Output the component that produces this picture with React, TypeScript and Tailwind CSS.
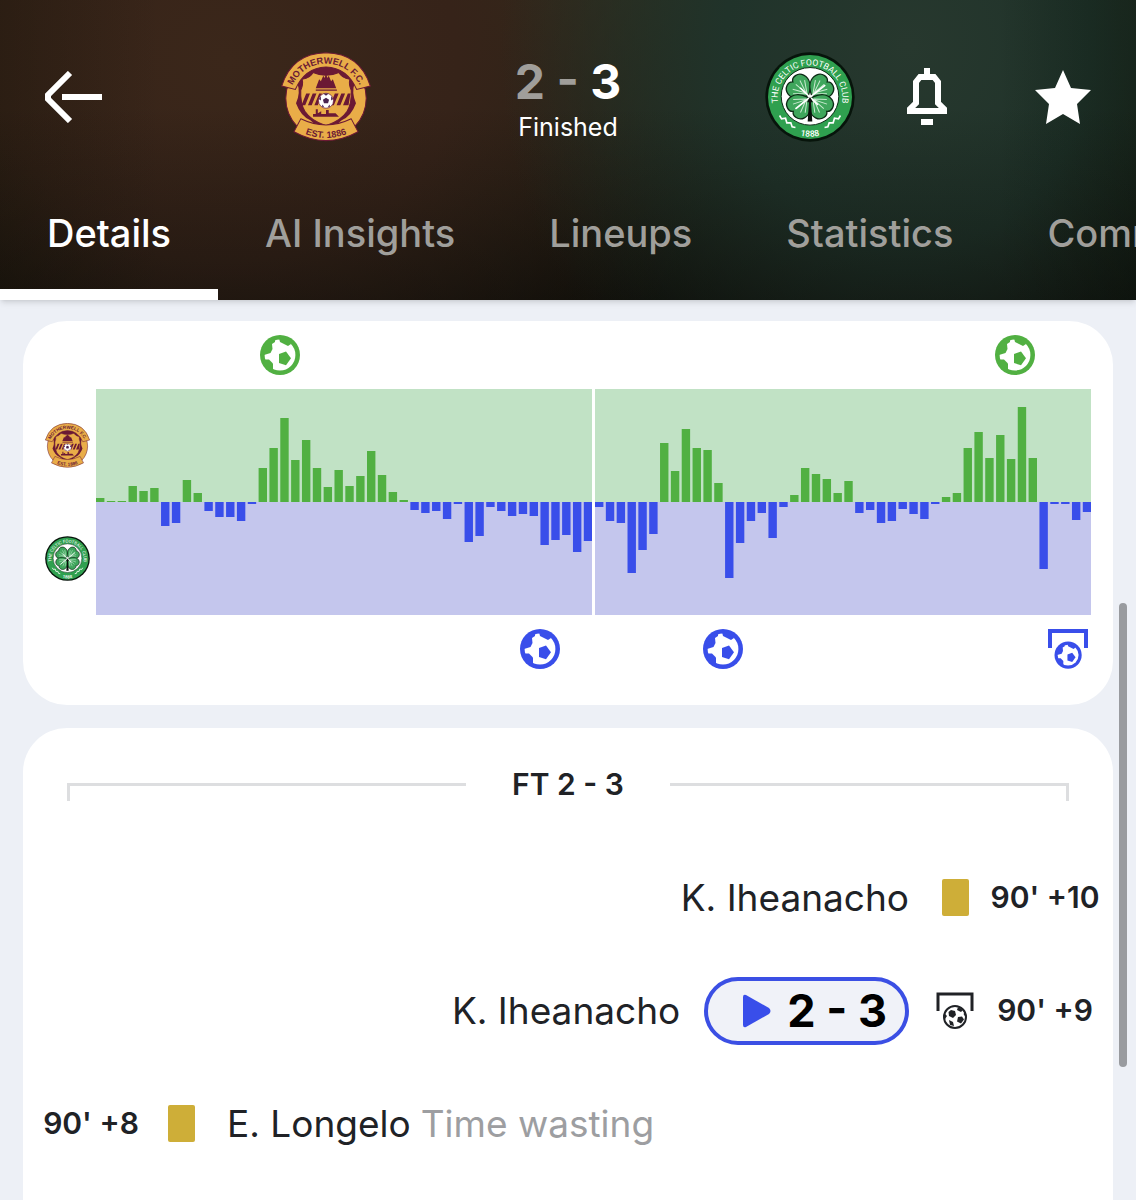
import clsx from "clsx";
import type { ReactNode } from "react";

const HOME = "#51b042";
const AWAY = "#394eea";

// positive values are home pressure, negative values are away pressure
const firstHalf = [
  4, 1, 1, 16, 11, 14, -24, -21, 22, 9, -9, -15, -15, -19, -2, 34, 54, 84, 42,
  62, 34, 15, 32, 16, 26, 51, 27, 10, 2, -8, -11, -9, -17, -2, -40, -34, -5,
  -9, -14, -12, -14, -43, -38, -33, -50, -39,
];
const secondHalf = [
  -5, -19, -21, -71, -48, -32, 59, 31, 73, 54, 52, 19, -76, -41, -19, -11, -36,
  -5, 7, 34, 28, 23, 9, 21, -11, -8, -21, -19, -7, -12, -17, -2, 5, 9, 54, 70,
  44, 67, 43, 95, 44, -67, -2, -2, -18, -10,
];

const tabs = ["Details", "AI Insights", "Lineups", "Statistics", "Commentary"];

function MotherwellBadge({ id, className }: { id: string; className?: string }) {
  return (
    <svg viewBox="64 40 264 264" className={className} role="img" aria-label="Motherwell">
      <circle cx="196" cy="176" r="118" fill="#e9ad48" stroke="#6b1934" strokeWidth="3" />
      <path d="M112 132 Q122 160 108 190 Q122 228 150 240 Q172 262 196 266 Q220 262 242 240 Q270 228 284 190 Q270 160 280 132 L262 104 Q230 78 196 78 Q162 78 130 104Z" fill="#6b1934" />
      <path d="M126 120 Q150 116 158 100 Q176 108 196 108 Q216 108 234 100 Q242 116 266 120 Q262 134 270 152 Q272 190 258 214 Q240 242 196 256 Q152 242 134 214 Q120 190 122 152 Q130 134 126 120Z" fill="#e9ad48" stroke="#6b1934" strokeWidth="3" />
      <path d="M166 146 l10 -26 l5 6 l7 -16 l4 6 l4 -12 l4 12 l4 -6 l7 16 l5 -6 l10 26Z M166 150h62v4h-62Z" fill="#6b1934" />
      <path d="M124 196 l14 -34 h11 l-14 34Z M143 196 l14 -34 h11 l-14 34Z M162 196 l14 -34 h8 l-12 34Z M208 196 l14 -34 h11 l-14 34Z M227 196 l14 -34 h11 l-14 34Z M246 196 l14 -34 h8 l-6 34Z" fill="#6b1934" />
      <path d="M158 230 v-8 h8 v-14 h6 v12 l10 -6 v8 h14 v-12 h8 v10 h20 l10 10Z" fill="#6b1934" />
      <circle cx="196" cy="183" r="22" fill="#fff" stroke="#6b1934" strokeWidth="2" />
      <path d="M196 174 l9 6 l-3 10 h-12 l-3 -10Z M188 162 h16 l-8 6Z M175 178 l6 -8 v12Z M217 178 l-6 -8 v12Z M184 200 l2 -6 l5 9Z M208 200 l-2 -6 l-5 9Z" fill="#4a2450" />
      <path d="M66 140 Q96 44 196 42 Q296 44 326 140 L286 150 Q258 86 196 84 Q134 86 106 150Z" fill="#e9ad48" stroke="#6b1934" strokeWidth="3" />
      <path d="M122 236 Q196 272 270 236 L290 274 Q196 326 102 274Z" fill="#e9ad48" stroke="#6b1934" strokeWidth="3" />
      <path id={`${id}-top`} d="M92 148 Q124 76 196 74 Q268 76 300 148" fill="none" />
      <path id={`${id}-bottom`} d="M116 272 Q196 312 276 272" fill="none" />
      <text fill="#6b1934" className="font-['Liberation_Sans'] text-[27px] font-bold">
        <textPath href={`#${id}-top`} startOffset="50%" textAnchor="middle">
          MOTHERWELL F.C.
        </textPath>
      </text>
      <text fill="#6b1934" className="font-['Liberation_Sans'] text-[27px] font-bold">
        <textPath href={`#${id}-bottom`} startOffset="50%" textAnchor="middle">
          EST. 1886
        </textPath>
      </text>
    </svg>
  );
}

function Leaf({ angle }: { angle: number }) {
  return (
    <g transform={`rotate(${angle} 180 168)`}>
      <path
        d="M180 162 C154 152 138 134 143 112 C148 92 172 88 180 100 C188 88 212 92 217 112 C222 134 206 152 180 162Z"
        fill="#3fa65c"
        stroke="#0c2a15"
        strokeWidth="4"
      />
      <path
        d="M180 158 V112 M179 150 L163 114 M181 150 L197 114 M178 154 L153 124 M182 154 L207 124"
        stroke="#c9ead0"
        strokeWidth="3"
        fill="none"
      />
    </g>
  );
}

function CelticBadge({ id, className }: { id: string; className?: string }) {
  return (
    <svg viewBox="44 34 272 272" className={className} role="img" aria-label="Celtic">
      <circle cx="180" cy="170" r="135" fill="#07140b" />
      <circle cx="180" cy="170" r="127" fill="#2fa04f" />
      <circle cx="180" cy="168" r="87" fill="#fff" stroke="#0c2a15" strokeWidth="3" />
      <Leaf angle={-50} />
      <Leaf angle={50} />
      <Leaf angle={132} />
      <Leaf angle={228} />
      <path d="M136 206 L226 134 M150 142 L204 194" stroke="#fff" strokeWidth="5" />
      <path d="M180 170 l-9 16 h6 l-4 58 h14 l-4 -58 h6Z" fill="#0a0f0b" />
      <path id={`${id}-top`} d="M86 200 A98 98 0 1 1 274 200" fill="none" />
      <path id={`${id}-bottom`} d="M140 284 Q180 296 220 284" fill="none" />
      <text fill="#fff" className="font-[Roboto] text-[26px]">
        <textPath href={`#${id}-top`} startOffset="50%" textAnchor="middle">
          THE CELTIC FOOTBALL CLUB
        </textPath>
      </text>
      <text fill="#fff" className="font-[Roboto] text-[26px] font-medium">
        <textPath href={`#${id}-bottom`} startOffset="50%" textAnchor="middle">
          1888
        </textPath>
      </text>
      <path
        d="M88 226 l6 10 l12 -2 l4 14 l12 0 l4 12 l10 2 M272 226 l-6 10 l-12 -2 l-4 14 l-12 0 l-4 12 l-10 2"
        stroke="#fff"
        strokeWidth="5"
        fill="none"
      />
    </svg>
  );
}

function Ball({ x = 0, y = 0, scale = 1, color }: { x?: number; y?: number; scale?: number; color: string }) {
  return (
    <g transform={`translate(${x} ${y}) scale(${scale})`} fill={color}>
      <circle cx="20" cy="20" r="20" />
      <circle cx="20" cy="20" r="15.4" fill="#fff" />
      <path d="M19 3 L20 7 L28 11 L31 9 L29 3Z" />
      <path d="M3 12 L8 5 L15 4 L15 7 L12 9 L12.500 14 L10.500 18 L4 20Z" />
      <path d="M3 24.500 L9 24.500 L13 28.500 L13 35 L7 34Z" />
      <path d="M19 19 L26 16.500 L31 23.300 L26 30.300 L19 28Z" />
    </g>
  );
}

function PenaltyIcon() {
  return (
    <svg viewBox="0 0 38 38" className="h-[38px] w-[38px]" role="img" aria-label="Penalty scored">
      <path d="M2 19 V2 H36 V19" fill="none" stroke="#202226" strokeWidth="3" />
      <circle cx="19" cy="25" r="11" fill="#fff" stroke="#202226" strokeWidth="2" />
      <g fill="#202226">
        <path d="M15 18 l4 1 l1 4 l-3 3 l-4 -2 l-0.500 -4Z" />
        <path d="M22 25 l4 -0.500 l2 3 l-3 4 l-4 -2Z" />
        <path d="M22 15 l5 3 l-2 2 l-4 -2Z" />
        <path d="M13 28 l4 2 l1 4 l-4 -1Z" />
        <path d="M29 20 v4 l-1.500 -2Z M9 22 l2 2 l-2 3Z" />
      </g>
    </svg>
  );
}

function Bars({ values, start }: { values: number[]; start: number }) {
  return (
    <>
      {values.map((v, i) => (
        <rect
          key={i}
          x={start + i * 10.84}
          y={v > 0 ? 167 - v : 167}
          width="8.4"
          height={Math.abs(v)}
          fill={v > 0 ? HOME : AWAY}
        />
      ))}
    </>
  );
}

function MomentumCard() {
  return (
    <section className="flex items-center gap-1.5 rounded-[44px] bg-white px-[22px] pt-3.5 pb-9">
      <div className="flex w-[45px] shrink-0 flex-col gap-[68px]">
        <MotherwellBadge id="mfc-small" className="h-[45px] w-[45px]" />
        <CelticBadge id="cfc-small" className="h-[45px] w-[45px]" />
      </div>
      <svg viewBox="0 0 995 334" className="min-w-0 flex-1" role="img" aria-label="Attack momentum">
        <rect y="54" width="995" height="113" fill="#c1e2c5" />
        <rect y="167" width="995" height="113" fill="#c4c6ed" />
        <Bars values={firstHalf} start={0} />
        <Bars values={secondHalf} start={499} />
        <rect x="496" y="54" width="3" height="226" fill="#fff" />
        <Ball x={164} color={HOME} />
        <Ball x={899} color={HOME} />
        <Ball x={424} y={294} color={AWAY} />
        <Ball x={607} y={294} color={AWAY} />
        <path d="M954 313 V296 H990 V313" fill="none" stroke={AWAY} strokeWidth="4" />
        <Ball x={958.5} y={306.5} scale={0.68} color={AWAY} />
      </svg>
    </section>
  );
}

function YellowCard() {
  return <div className="h-[37px] w-[27px] rounded-xs bg-[#ceae38]" role="img" aria-label="Yellow card" />;
}

type IncidentProps = {
  side: "home" | "away";
  time: string;
  icon: ReactNode;
  children: ReactNode;
};

function Incident({ side, time, icon, children }: IncidentProps) {
  return (
    <li className={clsx("flex h-[113px] items-center px-3.5", side === "away" && "flex-row-reverse")}>
      <span className="flex w-[108px] shrink-0 justify-center text-[30px] font-semibold whitespace-nowrap">{time}</span>
      <span className="flex w-[72px] shrink-0 justify-center">{icon}</span>
      <div className="mx-2.5 flex items-center text-[37px] whitespace-nowrap">{children}</div>
    </li>
  );
}

function Header() {
  return (
    <header className="relative bg-[#17150d] bg-[linear-gradient(to_bottom,transparent_35%,rgba(8,9,6,0.4)),linear-gradient(to_right,rgba(24,20,8,0.35),transparent_14%,transparent_88%,rgba(8,20,12,0.4)),radial-gradient(ellipse_36%_150%_at_80%_15%,#27382e_0%,#20332a_45%,transparent_100%),radial-gradient(ellipse_45%_150%_at_20%_20%,#3b271a_0%,#362319_45%,transparent_100%),linear-gradient(to_bottom,#2e2c1a,#12110b)] shadow-md">
      <div className="grid h-[194px] grid-cols-[1fr_574px_1fr] items-center">
        <button type="button" aria-label="Back" className="ml-[45px] justify-self-start">
          <svg viewBox="0 0 57 52" className="h-[52px] w-[57px]" fill="none" stroke="#fff" strokeWidth="6">
            <path d="M25 2 L3 24 V28 L25 50 M17 26 H57" />
          </svg>
        </button>
        <div className="flex items-center justify-between">
          <MotherwellBadge id="mfc" className="h-[90px] w-[90px]" />
          <div className="flex flex-col items-center pt-1.5 text-white">
            <div className="text-[48px] leading-[54px] font-bold">
              <span className="text-[#a09e9a]">2 - </span>3
            </div>
            <div className="text-[25px] leading-9">Finished</div>
          </div>
          <CelticBadge id="cfc" className="h-[90px] w-[90px]" />
        </div>
        <div className="flex items-center justify-between pr-[45px] pl-[51px]">
          <button type="button" aria-label="Notifications">
            <svg viewBox="0 0 42 58" className="h-[58px] w-[42px]" fill="none" stroke="#fff" strokeWidth="6">
              <path d="M4 43 V41 L10 35 V14 L14 9 H28 L32 14 V35 L38 41 V43Z M21 0 V8 M15 54 H27" />
            </svg>
          </button>
          <button type="button" aria-label="Favourite">
            <svg viewBox="0 0 56 54" className="h-[54px] w-14" fill="#fff">
              <path d="M28 0 L36 18 L56 20 L42 34 L45 54 L28 44 L11 54 L14 34 L0 20 L20 18Z" />
            </svg>
          </button>
        </div>
      </div>
      <nav className="flex h-[106px] overflow-hidden">
        {tabs.map((tab, i) => (
          <button
            key={tab}
            type="button"
            className={clsx(
              "h-full shrink-0 border-b-[11px] px-[47px] pb-4 text-[38px] font-medium",
              i === 0 ? "border-white text-white" : "border-transparent text-[#a09f9b]",
            )}
          >
            {tab}
          </button>
        ))}
      </nav>
    </header>
  );
}

export default function App() {
  return (
    <div className="relative h-screen overflow-hidden bg-[#edf0f6] font-[Inter,sans-serif] text-[#202226]">
      <Header />
      <main className="flex flex-col gap-[23px] px-[23px] pt-[21px]">
        <MomentumCard />
        <section className="rounded-t-[44px] bg-white pb-12">
          <div className="flex h-[113px] items-center gap-[46px] px-11">
            <div className="mt-3.5 h-[18px] flex-1 border-t-[3px] border-l-[3px] border-[#dddee0]" />
            <h2 className="text-[30px] font-semibold">FT 2 - 3</h2>
            <div className="mt-3.5 h-[18px] flex-1 border-t-[3px] border-r-[3px] border-[#dddee0]" />
          </div>
          <ul>
            <Incident side="away" time="90' +10" icon={<YellowCard />}>
              K. Iheanacho
            </Incident>
            <Incident side="away" time="90' +9" icon={<PenaltyIcon />}>
              K. Iheanacho
              <button
                type="button"
                className="ml-6 flex h-[68px] items-center gap-4 rounded-full border-4 border-[#3b4fe4] bg-[#f0f2f8] pr-[18px] pl-[35px] text-[45px] font-bold text-black"
              >
                <svg viewBox="0 0 28 34" className="h-[34px] w-7" fill={AWAY}>
                  <path d="M0 3 Q0 0 3 1 L26 14 Q29 17 26 20 L3 33 Q0 34 0 31Z" />
                </svg>
                2 - 3
              </button>
            </Incident>
            <Incident side="home" time="90' +8" icon={<YellowCard />}>
              E. Longelo <span className="ml-2.5 text-[#9d9ea1]">Time wasting</span>
            </Incident>
          </ul>
        </section>
      </main>
      <div className="absolute top-[603px] right-[9px] h-[464px] w-2 rounded-full bg-[#999b9f]" />
    </div>
  );
}
